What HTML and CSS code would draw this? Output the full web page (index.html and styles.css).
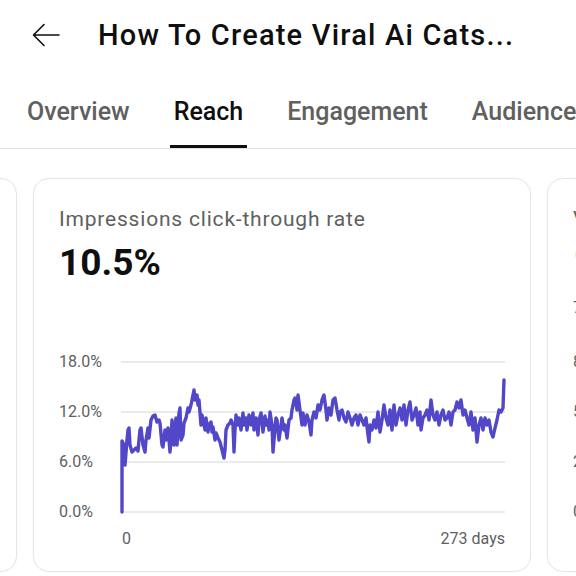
FILE: index.html
```html
<!DOCTYPE html>
<html>
<head>
<meta charset="utf-8">
<link rel="stylesheet" href="styles.css">
</head>
<body>
<header class="topbar">
  <svg class="back" width="28" height="24" viewBox="0 0 28 24" fill="none" stroke="#0f0f0f" stroke-width="1.6" stroke-linecap="round" stroke-linejoin="round">
    <path d="M27 12H1.5M12 1.5L1.5 12L12 22.5"/>
  </svg>
  <h1 class="title">How To Create Viral Ai Cats...</h1>
</header>
<nav class="tabs">
  <span class="tab">Overview</span>
  <span class="tab active">Reach</span>
  <span class="tab">Engagement</span>
  <span class="tab">Audience</span>
</nav>
<main class="cards">
  <section class="card"></section>
  <section class="card">
    <div class="card-title">Impressions click-through rate</div>
    <div class="card-value">10.5%</div>
    <div class="chart">
      <div class="grid-row"><span class="ylabel">18.0%</span><span class="gline"></span></div>
      <div class="grid-row"><span class="ylabel">12.0%</span><span class="gline"></span></div>
      <div class="grid-row"><span class="ylabel">6.0%</span><span class="gline"></span></div>
      <div class="grid-row last"><span class="ylabel">0.0%</span><span class="gline"></span></div>
      <div class="xlabels"><span>0</span><span>273 days</span></div>
      <svg class="plot" viewBox="121 362 384 150" preserveAspectRatio="none">
        <polyline fill="none" stroke="#5247c9" stroke-width="3.4" stroke-linejoin="round" stroke-linecap="round" points="122,512 122,441 124,445 125,465 127,440 128,430 129,428 130,445 132,452 134,450 136,448 138,451 139,440 140,430 141,428 143,445 145,452 146,440 148,428 149,438 151,420 153,416 155,415 157,422 159,420 160,423 162,445 163,447 165,430 166,440 168,428 170,452 171,440 172,420 174,445 175,430 176,418 177,445 179,413 180,408 181,440 183,435 184,423 186,418 188,408 189,412 191,405 193,395 194,390 195,400 197,395 198,405 199,400 201,425 202,415 203,420 205,430 206,418 208,432 209,425 211,422 212,432 213,427 215,440 216,433 218,438 220,442 222,450 224,458 225,450 226,430 228,425 230,423 231,420 233,425 234,452 235,430 236,415 238,425 239,418 241,430 243,413 244,425 246,418 247,430 249,415 251,425 253,413 254,430 256,418 258,435 259,420 261,413 263,432 265,416 266,425 268,420 269,430 270,412 272,425 273,452 274,440 276,418 277,420 279,440 281,426 282,418 284,430 285,425 287,438 289,420 291,418 292,410 294,400 295,398 297,410 298,395 300,410 302,425 303,413 305,425 307,415 309,422 311,435 312,420 314,412 316,418 318,405 320,410 322,400 324,395 326,410 327,420 329,408 331,415 333,400 335,398 337,410 339,420 340,412 342,410 344,418 346,422 348,412 350,418 352,425 354,418 356,415 358,425 360,415 362,420 364,425 366,418 368,435 369,442 370,425 372,430 374,420 376,428 378,412 380,432 382,420 384,405 386,418 388,425 390,410 392,430 394,405 396,425 398,415 400,408 402,420 404,405 406,425 408,410 410,402 412,420 414,415 416,408 418,425 420,412 421,430 423,418 425,415 427,410 429,420 431,400 433,415 435,420 437,412 439,425 441,415 443,410 445,420 447,418 449,412 451,425 453,412 455,410 457,402 459,408 461,400 463,415 465,410 467,418 469,425 471,412 473,430 475,418 477,442 479,425 481,418 483,430 485,418 487,425 489,420 491,432 493,437 495,428 497,420 499,410 501,412 503,408 504,380"/>
      </svg>
    </div>
  </section>
  <section class="card">
    <div class="card-title">Views from impressions</div>
    <div class="card-value">1.2K</div>
    <div class="card-sub">7 days</div>
    <div class="chart chart-after-sub">
      <div class="grid-row"><span class="ylabel">80</span><span class="gline"></span></div>
      <div class="grid-row"><span class="ylabel">53</span><span class="gline"></span></div>
      <div class="grid-row"><span class="ylabel">27</span><span class="gline"></span></div>
      <div class="grid-row last"><span class="ylabel">0</span><span class="gline"></span></div>
    </div>
  </section>
</main>
</body>
</html>
```

FILE: styles.css
```css
* { box-sizing: border-box; }
html, body {
  margin: 0;
  padding: 0;
  background: #ffffff;
  overflow: hidden;
  width: 576px;
  height: 576px;
}
body {
  font-family: Roboto, "Liberation Sans", sans-serif;
  color: #0f0f0f;
}
.topbar {
  display: flex;
  align-items: center;
  height: 70px;
  padding-left: 32px;
  gap: 38px;
}
.back { flex: none; }
.title {
  margin: 0;
  font-size: 29px;
  font-weight: 500;
  line-height: 70px;
  white-space: nowrap;
  letter-spacing: 1.2px;
}
.tabs {
  display: flex;
  gap: 36px;
  padding-left: 23px;
  border-bottom: 1px solid #e3e3e3;
  height: 79px;
  white-space: nowrap;
}
.tab {
  padding: 24px 4px 15px;
  line-height: 36px;
  font-size: 25px;
  font-weight: 500;
  color: #606060;
  border-bottom: 3px solid transparent;
}
.tab.active {
  color: #0f0f0f;
  border-bottom-color: #0f0f0f;
}
.cards {
  display: flex;
  gap: 16px;
  margin-top: 29px;
  margin-left: -481px;
}
.card {
  flex: none;
  width: 498px;
  height: 394px;
  border: 1px solid #e6e6e6;
  border-radius: 16px;
  box-shadow: 0 0 3px rgba(0,0,0,0.04);
  padding: 26px 25px 0 25px;
  background: #fff;
  overflow: hidden;
}
.card-title {
  font-size: 21px;
  line-height: 28px;
  letter-spacing: 0.8px;
  color: #606060;
  white-space: nowrap;
}
.card-value {
  margin-top: 8px;
  font-size: 37px;
  line-height: 44px;
  font-weight: 700;
  color: #0f0f0f;
}
.card-sub {
  margin-top: 13px;
  font-size: 16px;
  line-height: 20px;
  color: #606060;
}
.chart {
  position: relative;
  margin-top: 67px;
}
.chart-after-sub { margin-top: 34px; }
.grid-row {
  display: flex;
  align-items: flex-start;
  height: 50px;
}
.grid-row.last { height: 20px; }
.ylabel {
  width: 62px;
  flex: none;
  font-size: 16px;
  line-height: 20px;
  color: #606060;
}
.gline {
  flex: 1;
  height: 2px;
  margin-top: 9px;
  background: #ebebeb;
}
.xlabels {
  display: flex;
  justify-content: space-between;
  margin-top: 7px;
  padding-left: 63px;
  font-size: 16px;
  line-height: 20px;
  color: #606060;
}
.plot {
  position: absolute;
  left: 62px;
  top: 10px;
  width: 384px;
  height: 150px;
  overflow: visible;
}
```
